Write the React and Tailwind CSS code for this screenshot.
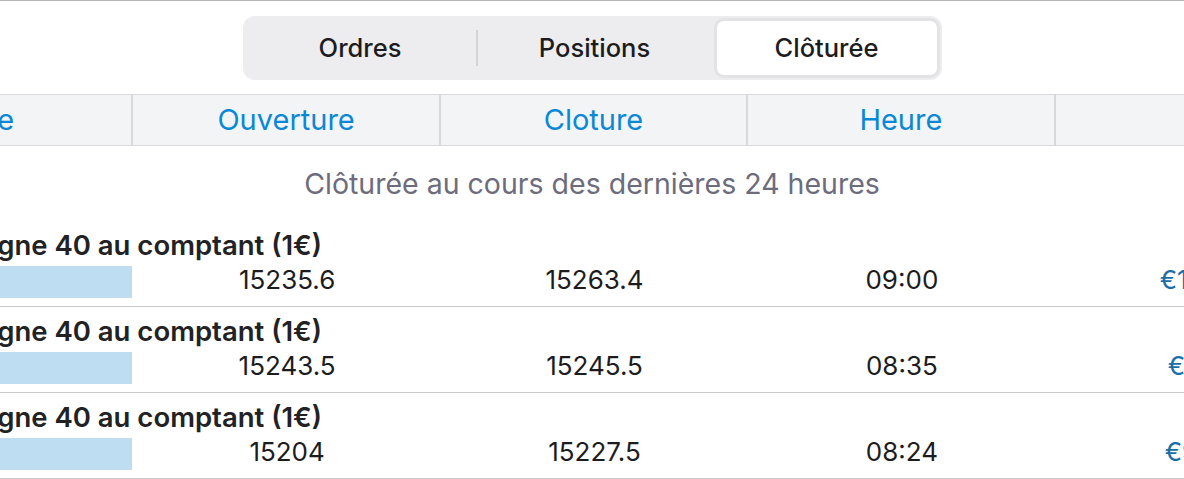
import React from "react";

const rows = [
  { name: "Allemagne 40 au comptant (1€)", open: "15235.6", close: "15263.4", time: "09:00", pnl: "€139.00" },
  { name: "Allemagne 40 au comptant (1€)", open: "15243.5", close: "15245.5", time: "08:35", pnl: "€10.00" },
  { name: "Allemagne 40 au comptant (1€)", open: "15204", close: "15227.5", time: "08:24", pnl: "€94.00" },
];

const cols = ["Taille", "Ouverture", "Cloture", "Heure", "P/L"];

const App = () => {
  return (
    <div
      className="h-[479px] w-[1184px] overflow-hidden border-t border-[#b5b5b5] bg-white text-[#1c1c1e]"
      style={{ fontFamily: "Inter, 'Noto Sans', sans-serif" }}
    >
      <div className="flex justify-center pt-[15px]">
        <div className="flex h-[64px] w-[699px] items-center rounded-[12px] bg-[#ededef] p-[2px] text-[25.5px] font-medium">
          <div className="flex h-full w-[231px] items-center justify-center">Ordres</div>
          <div className="h-[36px] w-[2px] bg-[#d4d4d6]" />
          <div className="flex h-full w-[234px] items-center justify-center">Positions</div>
          <div className="ml-[2px] flex h-full w-[226px] items-center justify-center rounded-[10px] border-[3px] border-[#e3e3e5] bg-white">
            Clôturée
          </div>
        </div>
      </div>

      <div className="-ml-[174px] mt-[14px] w-[1537px]">
        <div className="grid h-[52px] grid-cols-5 border-y border-[#d9d9dc] bg-[#f3f4f6]">
          {cols.map((c, i) => (
            <div
              key={c}
              className={
                i < 4
                  ? "flex items-center justify-center border-r-[2px] border-[#d9d9dc] text-[29px] text-[#0a88d6]"
                  : "flex items-center justify-center text-[29px] text-[#0a88d6]"
              }
            >
              {i === 4 ? "" : c}
            </div>
          ))}
        </div>

        <div className="ml-[174px] w-[1184px] pt-[23px] pb-[22px] text-center text-[28.5px] leading-[30px] text-[#6d6c7c]">
          Clôturée au cours des dernières 24 heures
        </div>

        {rows.map((r, idx) => (
          <div key={idx} className="border-b border-[#cacaca] pt-[8px] pb-[8px]">
            <div className="pl-[80px] text-[27.5px] font-semibold leading-[32px] text-[#222224]">{r.name}</div>
            <div className="mt-[5px] grid h-[32px] grid-cols-5 items-start text-[26px] leading-[28px]">
              <div className="ml-[16px] mr-[1px] h-full bg-[#bedcf2]" />
              <div className="text-center">{r.open}</div>
              <div className="text-center">{r.close}</div>
              <div className="text-center">{r.time}</div>
              <div className="text-center text-[#1a6ea8]">{r.pnl}</div>
            </div>
          </div>
        ))}
      </div>
    </div>
  );
};

export default App;
